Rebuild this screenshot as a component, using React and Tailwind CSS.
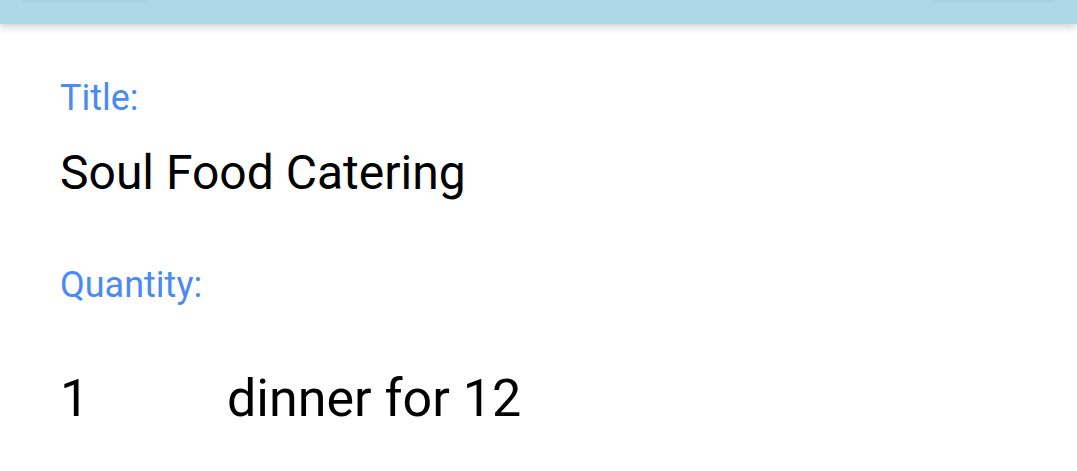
export default function App() {
  return (
    <div className="min-h-[471px] w-full bg-white font-['Roboto',sans-serif]">
      <div className="relative h-[24px] bg-[#add8e6] shadow-[0_2px_10px_rgba(0,0,0,0.22)]">
        <div className="flex justify-between px-[22px]">
          <div className="h-[2px] w-[126px] rounded-b-md bg-[#a2cddc] blur-[1px]" />
          <div className="h-[2px] w-[124px] rounded-b-md bg-[#a2cddc] blur-[1px]" />
        </div>
      </div>

      <div className="px-[60px] pt-[56px]">
        <p className="text-[36px] leading-none text-[#4a8af4]">Title:</p>
        <p className="mt-[33px] text-[48px] leading-none text-black">Soul Food Catering</p>

        <p className="mt-[70px] text-[36px] leading-none text-[#4a8af4]">Quantity:</p>
        <div className="mt-[70px] flex text-[52px] leading-none text-black">
          <span className="w-[167px]">1</span>
          <span>dinner for 12</span>
        </div>
      </div>
    </div>
  );
}
